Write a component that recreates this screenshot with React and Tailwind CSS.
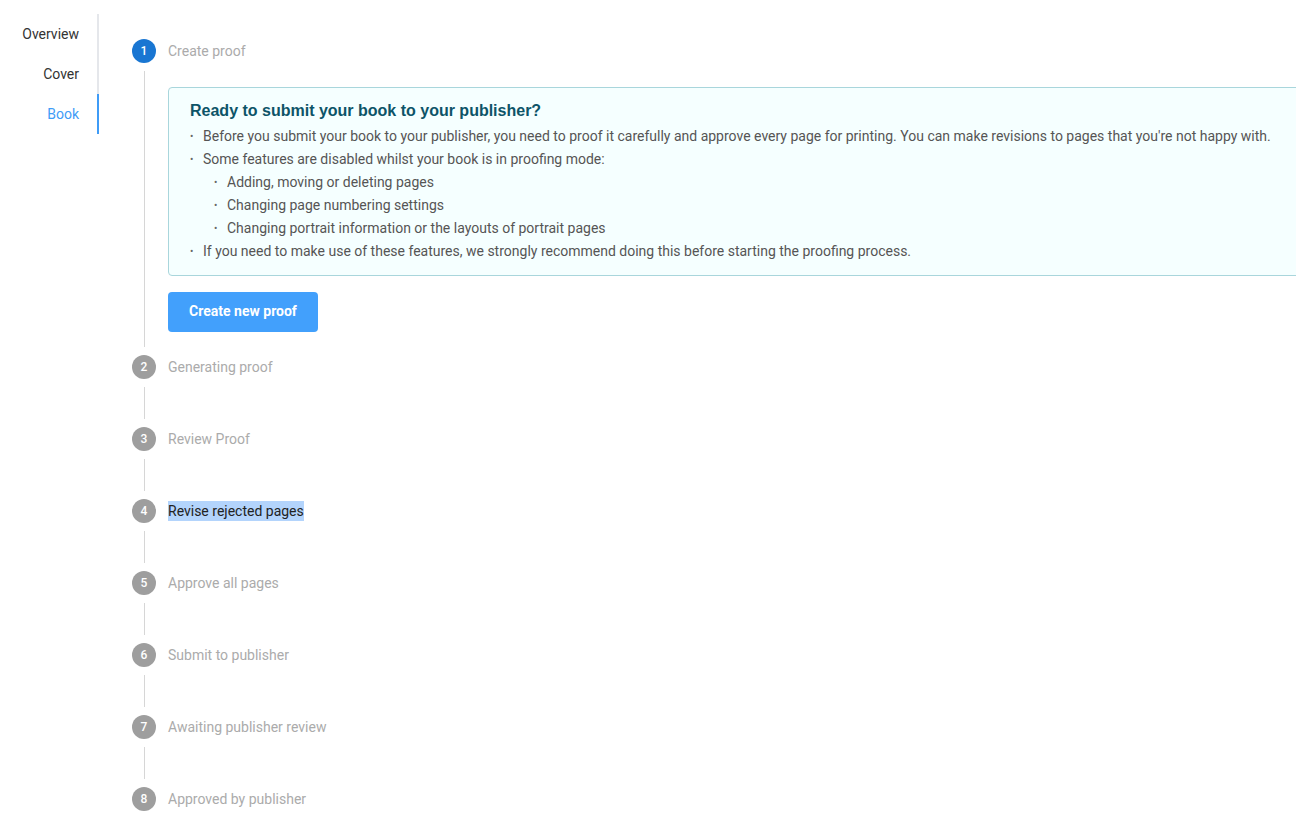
const NAV = [
  { label: "Overview", active: false },
  { label: "Cover", active: false },
  { label: "Book", active: true },
];

const STEPS = [
  "Create proof",
  "Generating proof",
  "Review Proof",
  "Revise rejected pages",
  "Approve all pages",
  "Submit to publisher",
  "Awaiting publisher review",
  "Approved by publisher",
];

function Bullet({ children, nested }) {
  return (
    <li className={`flex items-start h-[23px] leading-[23px] ${nested ? "pl-6" : ""}`}>
      <span className="w-[13px] shrink-0 text-[10px] text-[#666]">•</span>
      <span>{children}</span>
    </li>
  );
}

function StepIcon({ n, active }) {
  return (
    <div
      className={`w-6 h-6 rounded-full flex items-center justify-center text-[12px] font-medium text-white shrink-0 ${
        active ? "bg-[#1976d2]" : "bg-[#9e9e9e]"
      }`}
    >
      {n}
    </div>
  );
}

function Connector({ height }) {
  return (
    <div className="ml-3 py-2" style={{ height }}>
      <div className="h-full border-l border-[#d6d6d6]" />
    </div>
  );
}

export default function App() {
  return (
    <div
      className="w-[1296px] h-[829px] overflow-hidden bg-white flex text-[14px]"
      style={{ fontFamily: "Roboto, 'Liberation Sans', sans-serif" }}
    >
      <nav className="w-[99px] shrink-0 pt-[14px]">
        <ul className="border-r-2 border-[#e5e7eb]">
          {NAV.map((item) => (
            <li
              key={item.label}
              className={`h-10 flex items-center justify-end -mr-[2px] ${
                item.active
                  ? "text-[#3f9cf7] border-r-2 border-[#3f9cf7] pr-[18px]"
                  : "text-[#333] pr-5"
              }`}
            >
              {item.label}
            </li>
          ))}
        </ul>
      </nav>

      <main className="flex-1 pl-[33px] pt-[39px] min-w-0">
        {STEPS.map((label, i) => (
          <div key={label}>
            <div className="flex items-center h-6">
              <StepIcon n={i + 1} active={i === 0} />
              {i === 3 ? (
                <span className="ml-3 bg-[#b3d4fc] text-[#222] leading-[20px]">{label}</span>
              ) : (
                <span className="ml-3 text-[#ababab]">{label}</span>
              )}
            </div>

            {i === 0 && (
              <div className="flex">
                <div className="ml-3 py-2 shrink-0">
                  <div className="h-[276px] border-l border-[#d6d6d6]" />
                </div>
                <div className="pl-[23px] pt-6">
                  <div className="w-[1160px] h-[189px] rounded border border-[#a9d6dc] bg-[#f5ffff] pl-[21px] pt-[12px]">
                    <h2
                      className="text-[16px] font-bold text-[#0d5468] leading-[22px]"
                      style={{ fontFamily: "'Liberation Sans', Arial, sans-serif" }}
                    >
                      Ready to submit your book to your publisher?
                    </h2>
                    <ul className="mt-[3px] text-[#555] text-[14px]">
                      <Bullet>
                        Before you submit your book to your publisher, you need to proof it carefully and approve every page for printing. You can make revisions to pages that you're not happy with.
                      </Bullet>
                      <Bullet>Some features are disabled whilst your book is in proofing mode:</Bullet>
                      <Bullet nested>Adding, moving or deleting pages</Bullet>
                      <Bullet nested>Changing page numbering settings</Bullet>
                      <Bullet nested>Changing portrait information or the layouts of portrait pages</Bullet>
                      <Bullet>
                        If you need to make use of these features, we strongly recommend doing this before starting the proofing process.
                      </Bullet>
                    </ul>
                  </div>
                  <button className="mt-[16px] w-[150px] h-10 rounded bg-[#42a0fc] text-white font-bold text-[14px] pb-px">
                    Create new proof
                  </button>
                </div>
              </div>
            )}

            {i > 0 && i < STEPS.length - 1 && <Connector height={48} />}
          </div>
        ))}
      </main>
    </div>
  );
}
